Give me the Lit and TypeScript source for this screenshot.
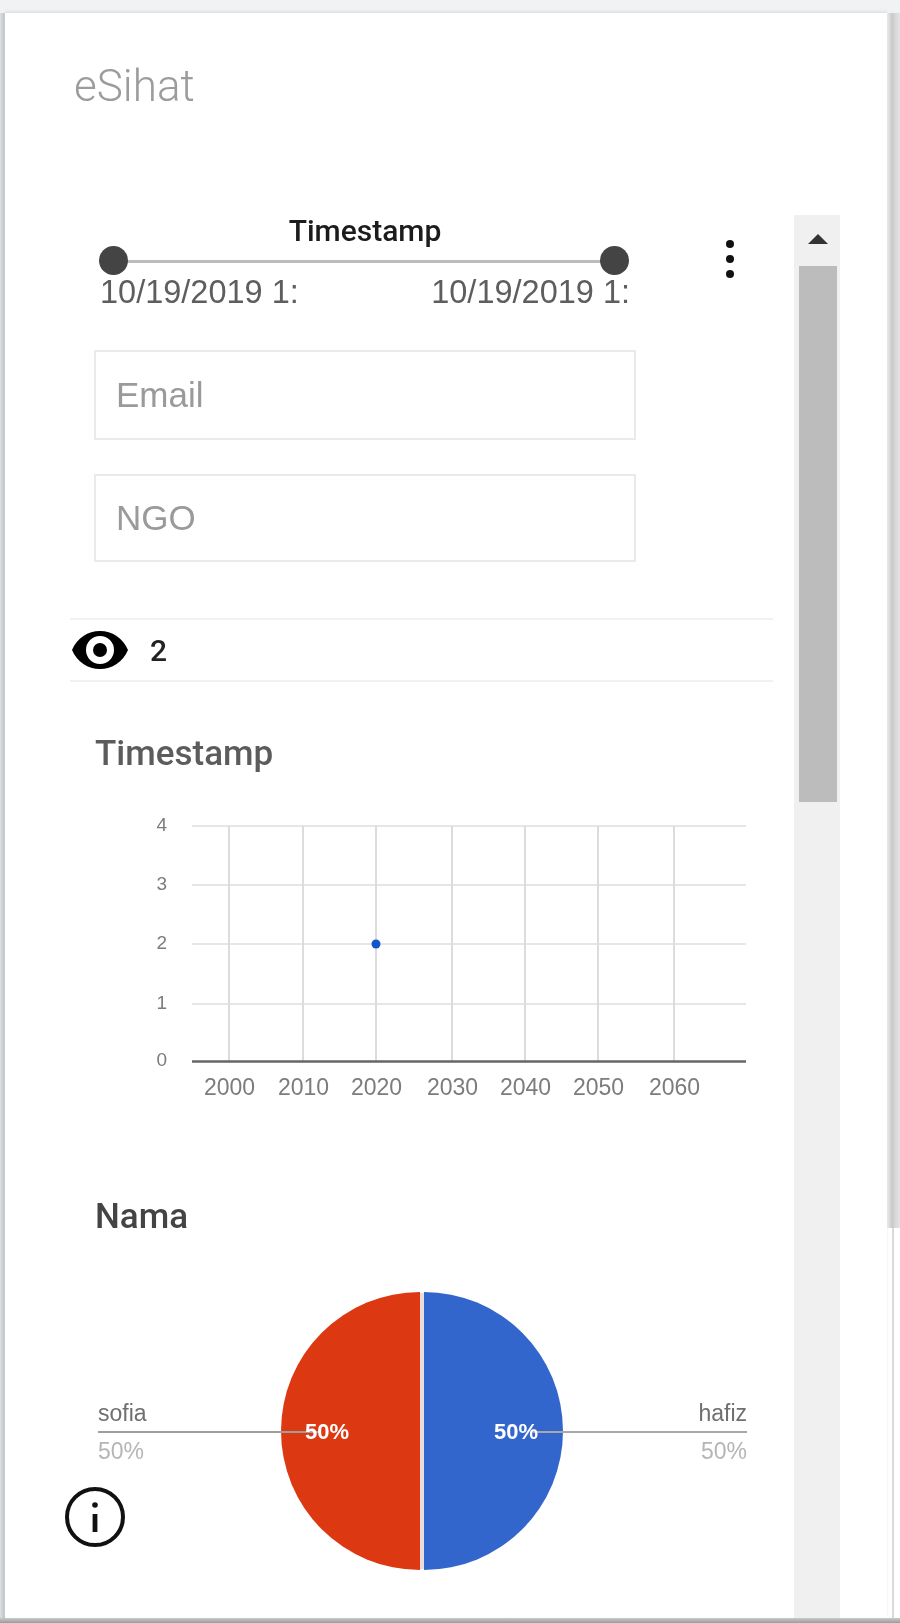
import { LitElement, html, css, svg } from 'lit';
import { customElement } from 'lit/decorators.js';

const Y_TICKS = [
  { label: '4', y: 825 },
  { label: '3', y: 884 },
  { label: '2', y: 943 },
  { label: '1', y: 1003 },
  { label: '0', y: 1060 },
];

const X_TICKS = [
  { label: '2000', x: 229 },
  { label: '2010', x: 303 },
  { label: '2020', x: 376 },
  { label: '2030', x: 452 },
  { label: '2040', x: 525 },
  { label: '2050', x: 598 },
  { label: '2060', x: 674 },
];

// Chart coordinates below are page pixels, shifted by the chart's own origin
const CHART_X = 95;
const CHART_Y = 805;

@customElement('time-chart')
export class TimeChart extends LitElement {
  static styles = css`
    :host { display: block; }
    svg { display: block; }
    text { font-family: "Liberation Sans", Arial, sans-serif; fill: #7c7c7c; }
    .x-label { font-size: 23px; }
    .y-label { font-size: 19px; }
  `;

  render() {
    return html`
      <svg width="660" height="300" viewBox="${CHART_X} ${CHART_Y} 660 300">
        ${Y_TICKS.slice(0, 4).map(t => svg`<line x1="192" x2="746" y1=${t.y} y2=${t.y} stroke="#e6e6e6" stroke-width="2"></line>`)}
        ${X_TICKS.map(t => svg`<line x1=${t.x} x2=${t.x} y1="825" y2="1060" stroke="#dcdcdc" stroke-width="2"></line>`)}
        <line x1="192" x2="746" y1="1060.5" y2="1060.5" stroke="#666" stroke-width="2.5"></line>
        ${Y_TICKS.map(t => svg`<text class="y-label" x="167" y=${t.y + 5} text-anchor="end">${t.label}</text>`)}
        ${X_TICKS.map(t => svg`<text class="x-label" x=${t.x + 0.5} y="1094" text-anchor="middle">${t.label}</text>`)}
        <circle cx="376" cy="943" r="4.5" fill="#1155cc"></circle>
      </svg>
    `;
  }
}

@customElement('pie-chart')
export class PieChart extends LitElement {
  static styles = css`
    :host { display: block; }
    svg { display: block; }
    text { font-family: "Liberation Sans", Arial, sans-serif; font-size: 23px; }
    .name { fill: #6f6f6f; }
    .pct { fill: #b5b5b5; }
    .inner { fill: #fff; font-weight: 700; font-size: 22px; }
  `;

  render() {
    return html`
      <svg width="680" height="300" viewBox="90 1285 680 300">
        <path d="M420 1291 A139 139 0 0 0 420 1569 Z" fill="#dc3912"></path>
        <path d="M424 1291 A139 139 0 0 1 424 1569 Z" fill="#3366cc"></path>
        <rect x="420" y="1292" width="4" height="276" fill="#e9dedd"></rect>
        <line x1="98" x2="320" y1="1431" y2="1431" stroke="#9e9e9e" stroke-width="2"></line>
        <line x1="533" x2="747" y1="1431" y2="1431" stroke="#a8a8a8" stroke-width="2"></line>
        <text class="inner" x="327" y="1438" text-anchor="middle">50%</text>
        <text class="inner" x="516" y="1438" text-anchor="middle">50%</text>
        <text class="name" x="98" y="1420">sofia</text>
        <text class="pct" x="98" y="1458">50%</text>
        <text class="name" x="747" y="1420" text-anchor="end">hafiz</text>
        <text class="pct" x="747" y="1458" text-anchor="end">50%</text>
      </svg>
    `;
  }
}

@customElement('app-root')
export class AppRoot extends LitElement {
  static styles = css`
    :host {
      display: block;
      width: 900px;
      height: 1623px;
      overflow: hidden;
      background: #f1f2f4;
      font-family: "Liberation Sans", Arial, sans-serif;
    }

    .frame {
      display: flex;
      flex-direction: column;
      height: 1623px;
      box-sizing: border-box;
      padding-top: 13px;
      filter: blur(0.6px);
    }

    .row {
      display: flex;
      height: 1605px;
    }

    .bottom-edge {
      height: 5px;
      background: linear-gradient(to bottom, #c9cacb, #9a9b9c);
    }

    .left-edge {
      width: 5px;
      background: linear-gradient(to right, #dfe1e3, #b9bcbf);
    }

    .card {
      position: relative;
      width: 882px;
      height: 1605px;
      background: #fff;
      box-shadow: 0 -2px 2px #e0e2e4;
      display: flex;
      flex-direction: column;
      overflow: hidden;
    }

    .page-scroll {
      flex: 1;
      background: #fff;
    }

    .page-thumb {
      height: 1215px;
      background: linear-gradient(to right, #ececec, #c9c9c9 40%, #d6d6d6 60%, #e4e4e4);
    }

    .page-track {
      height: 390px;
      margin-left: 5px;
      width: 2px;
      background: #dadada;
    }

    .title {
      font-family: Roboto, sans-serif;
      font-weight: 300;
      font-size: 44px;
      line-height: 44px;
      color: #9c9c9c;
      padding: 51px 0 0 69px;
      height: 147px;
      box-sizing: border-box;
    }

    .body {
      display: flex;
      flex: 1;
      min-height: 0;
    }

    .content {
      width: 789px;
      flex: none;
      overflow: hidden;
    }

    .filters {
      display: flex;
      padding-left: 89px;
    }

    .filter-col {
      width: 542px;
      padding-top: 55px;
    }

    .slider-label {
      font-family: Roboto, sans-serif;
      font-weight: 500;
      font-size: 30px;
      line-height: 32px;
      height: 32px;
      text-align: center;
      color: #1c1c1c;
    }

    .slider {
      position: relative;
      height: 29px;
      margin-top: -1px;
    }

    .track {
      position: absolute;
      left: 19px;
      right: 22px;
      top: 14px;
      height: 3px;
      background: #bcbcbc;
    }

    .knob {
      position: absolute;
      top: 0;
      width: 29px;
      height: 29px;
      border-radius: 50%;
      background: #444;
    }

    .knob.a { left: 5px; }
    .knob.b { left: 506px; }

    .dates {
      display: flex;
      justify-content: space-between;
      padding: 0 6px 0 6px;
      margin-top: -2px;
      font-size: 32.5px;
      line-height: 38px;
      color: #5e5e5e;
    }

    .date {
      white-space: nowrap;
    }

    .field {
      height: 90px;
      box-sizing: border-box;
      border: 2px solid #eaeaea;
      padding-left: 20px;
      display: flex;
      align-items: center;
      font-size: 35px;
      color: #9a9a9a;
    }

    .field.email { margin-top: 39px; }
    .field.ngo { height: 88px; margin-top: 34px; }

    .menu {
      margin-left: 90px;
      padding-top: 80px;
      display: flex;
      flex-direction: column;
      gap: 7px;
    }

    .menu span {
      width: 8px;
      height: 8px;
      border-radius: 50%;
      background: #111;
    }

    .count {
      display: flex;
      align-items: center;
      margin: 56px 0 0 65px;
      width: 703px;
      height: 64px;
      box-sizing: border-box;
      border-top: 2px solid #f1f1f1;
      border-bottom: 2px solid #f1f1f1;
      font-family: Roboto, sans-serif;
      font-weight: 500;
      font-size: 30px;
      color: #222;
      gap: 22px;
    }

    .count svg { display: block; margin-left: 2px; }

    .chart-title {
      font-family: Roboto, sans-serif;
      font-weight: 500;
      font-size: 35px;
      line-height: 38px;
      color: #5c5c5c;
      margin-left: 90px;
    }

    .chart-title.timestamp { margin-top: 53px; }
    .chart-title.nama { margin-top: 92px; color: #444; }

    time-chart { margin: 33px 0 0 90px; }
    pie-chart { margin: 50px 0 0 85px; }

    .scrollbar {
      width: 46px;
      flex: none;
      background: #f0f0f0;
      margin-top: 55px;
      display: flex;
      flex-direction: column;
      align-items: center;
    }

    .arrow {
      height: 51px;
      width: 100%;
      display: flex;
      justify-content: center;
      padding: 19px 0 0 2px;
      box-sizing: border-box;
    }

    .arrow i {
      display: block;
      width: 0;
      height: 0;
      border-left: 10px solid transparent;
      border-right: 10px solid transparent;
      border-bottom: 10px solid #333;
    }

    .thumb {
      width: 38px;
      height: 536px;
      margin-left: 2px;
      background: #bcbcbc;
    }

    .info {
      position: absolute;
      left: 60px;
      top: 1474px;
      display: block;
    }
  `;

  render() {
    return html`
      <div class="frame">
        <div class="row">
          <div class="left-edge"></div>
          <div class="card">
            <div class="title">eSihat</div>
            <div class="body">
              <div class="content">
                <div class="filters">
                  <div class="filter-col">
                    <div class="slider-label">Timestamp</div>
                    <div class="slider">
                      <div class="track"></div>
                      <div class="knob a"></div>
                      <div class="knob b"></div>
                    </div>
                    <div class="dates">
                      <div class="date">10/19/2019 1:</div>
                      <div class="date">10/19/2019 1:</div>
                    </div>
                    <div class="field email">Email</div>
                    <div class="field ngo">NGO</div>
                  </div>
                  <div class="menu"><span></span><span></span><span></span></div>
                </div>
                <div class="count">
                  <svg width="56" height="40" viewBox="0 0 56 40">
                    <path fill="#000" fill-rule="evenodd" d="M28 1C16 1 5 8 0 20c5 12 16 19 28 19s23-7 28-19C51 8 40 1 28 1zm0 33a14 14 0 1 1 0-28 14 14 0 0 1 0 28z"></path>
                    <circle cx="28" cy="20" r="7" fill="#000"></circle>
                  </svg>
                  <span>2</span>
                </div>
                <div class="chart-title timestamp">Timestamp</div>
                <time-chart></time-chart>
                <div class="chart-title nama">Nama</div>
                <pie-chart></pie-chart>
              </div>
              <div class="scrollbar">
                <div class="arrow"><i></i></div>
                <div class="thumb"></div>
              </div>
            </div>
            <svg class="info" width="64" height="64" viewBox="0 0 64 64">
              <circle cx="30" cy="30" r="28" fill="#fff" stroke="#111" stroke-width="4"></circle>
              <circle cx="30" cy="18" r="2.8" fill="#111"></circle>
              <rect x="27.6" y="27" width="4.8" height="18" fill="#111"></rect>
            </svg>
          </div>
          <div class="page-scroll">
            <div class="page-thumb"></div>
            <div class="page-track"></div>
          </div>
        </div>
        <div class="bottom-edge"></div>
      </div>
    `;
  }
}
